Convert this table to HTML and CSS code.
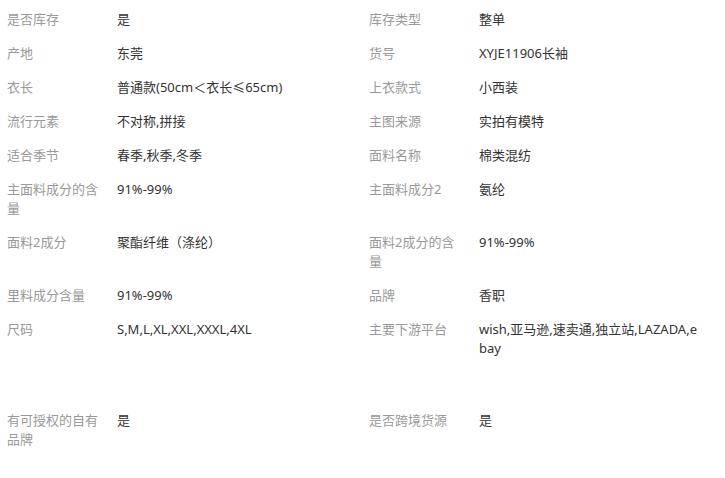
FILE: index.html
```html
<!DOCTYPE html>
<html lang="zh">
<head>
<meta charset="utf-8">
<link rel="stylesheet" href="styles.css">
</head>
<body>
<div class="attrs">
  <div class="row"><div class="k">是否库存</div><div class="v">是</div><div class="k">库存类型</div><div class="v">整单</div></div>
  <div class="row"><div class="k">产地</div><div class="v">东莞</div><div class="k">货号</div><div class="v">XYJE11906长袖</div></div>
  <div class="row"><div class="k">衣长</div><div class="v">普通款(50cm＜衣长≤65cm)</div><div class="k">上衣款式</div><div class="v">小西装</div></div>
  <div class="row"><div class="k">流行元素</div><div class="v">不对称,拼接</div><div class="k">主图来源</div><div class="v">实拍有模特</div></div>
  <div class="row"><div class="k">适合季节</div><div class="v">春季,秋季,冬季</div><div class="k">面料名称</div><div class="v">棉类混纺</div></div>
  <div class="row"><div class="k">主面料成分的含量</div><div class="v">91%-99%</div><div class="k">主面料成分2</div><div class="v">氨纶</div></div>
  <div class="row"><div class="k">面料2成分</div><div class="v">聚酯纤维（涤纶）</div><div class="k">面料2成分的含量</div><div class="v">91%-99%</div></div>
  <div class="row"><div class="k">里料成分含量</div><div class="v">91%-99%</div><div class="k">品牌</div><div class="v">香职</div></div>
  <div class="row row-spaced"><div class="k">尺码</div><div class="v">S,M,L,XL,XXL,XXXL,4XL</div><div class="k">主要下游平台</div><div class="v">wish,亚马逊,速卖通,独立站,LAZADA,ebay</div></div>
  <div class="row"><div class="k">有可授权的自有品牌</div><div class="v">是</div><div class="k">是否跨境货源</div><div class="v">是</div></div>
</div>
</body>
</html>
```
FILE: styles.css
```css
html, body {
  margin: 0;
  padding: 0;
  background: #fff;
}
body {
  font-family: "Noto Sans", "Noto Sans CJK SC", sans-serif;
  font-size: 13px;
  line-height: 19px;
  color: #333;
}
.attrs {
  padding: 2px 0 0 7px;
}
.row {
  display: grid;
  grid-template-columns: 110px 252px 110px 219px;
  padding: 8px 0 7px;
}
.row-spaced {
  padding-bottom: 45px;
}
.k {
  color: #999;
  padding-right: 14px;
  word-break: break-all;
}
.v {
  color: #333;
  word-break: break-all;
}
```
